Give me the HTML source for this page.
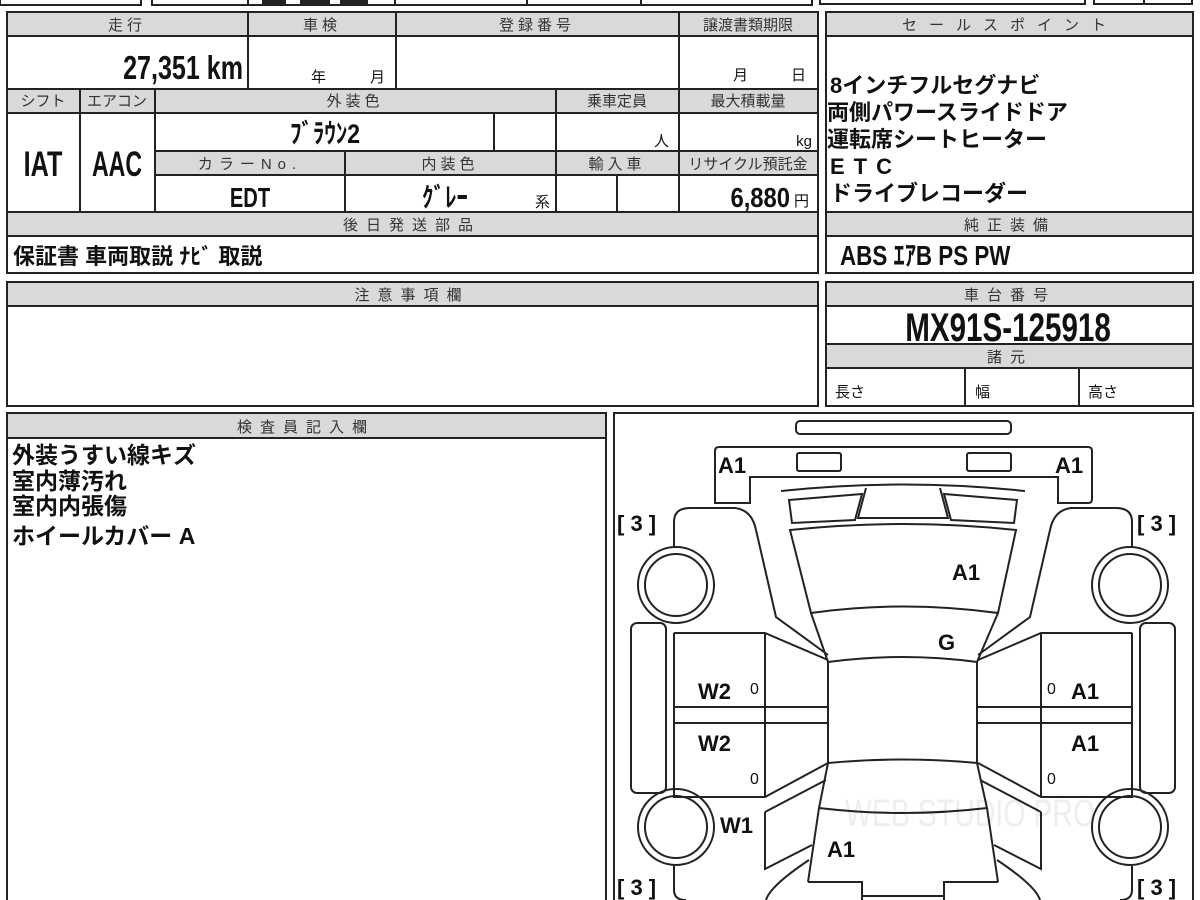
<!DOCTYPE html>
<html><head><meta charset="utf-8"><style>
html,body{margin:0;padding:0;background:#fff;width:1200px;height:900px;overflow:hidden}
svg{display:block}
text{font-family:"Liberation Sans","Noto Sans CJK JP",sans-serif;fill:#111}
.h{font-size:15px;text-anchor:middle;fill:#333;letter-spacing:4px}
.n{font-weight:bold}
</style></head><body>
<svg width="1200" height="900" viewBox="0 0 1200 900" xmlns="http://www.w3.org/2000/svg">
<g fill="none" stroke="#222" stroke-width="2">
<rect x="0" y="-20" width="141" height="25"/>
<rect x="152" y="-20" width="660" height="25"/>
<path d="M248,-5V5M395,-5V5M527,-5V5M641,-5V5"/>
<rect x="820" y="-20" width="265" height="24"/>
<rect x="1094" y="-20" width="98" height="24"/>
<path d="M1144,-5V4"/>
</g>
<rect x="262" y="0" width="24" height="5" fill="#222"/><rect x="300" y="0" width="30" height="5" fill="#222"/><rect x="340" y="0" width="28" height="5" fill="#222"/>
<g fill="#d9d9d9">
<rect x="7" y="12" width="811" height="24"/><rect x="7" y="89" width="811" height="24"/>
<rect x="155" y="151" width="663" height="24"/><rect x="7" y="212" width="811" height="24"/>
<rect x="826" y="12" width="367" height="24"/><rect x="826" y="212" width="367" height="24"/>
<rect x="826" y="282" width="367" height="24"/><rect x="826" y="344" width="367" height="24"/>
<rect x="7" y="282" width="811" height="24"/><rect x="7" y="413" width="599" height="25"/>
</g>
<g fill="none" stroke="#222" stroke-width="2">
<rect x="7" y="12" width="811" height="261"/>
<path d="M7,36H818M7,89H818M7,113H818M155,151H818M155,175H818M7,212H818M7,236H818"/>
<path d="M248,12V89M396,12V89M679,12V212M80,89V212M155,89V212M556,89V212M494,113V151M345,151V212M617,175V212"/>
<rect x="826" y="12" width="367" height="261"/>
<path d="M826,36H1193M826,212H1193M826,236H1193"/>
<rect x="826" y="282" width="367" height="124"/>
<path d="M826,306H1193M826,344H1193M826,368H1193M965,368V406M1079,368V406"/>
<rect x="7" y="282" width="811" height="124"/><path d="M7,306H818"/>
<rect x="7" y="413" width="599" height="500"/><path d="M7,438H606"/>
<rect x="614" y="413" width="579" height="500"/>
</g>
<text class="h" x="127" y="30">走行</text><text class="h" x="322" y="30">車検</text>
<text class="h" x="537" y="30">登録番号</text><text class="h" x="748" y="30" style="letter-spacing:0">譲渡書類期限</text>
<text class="n" transform="translate(243,79) scale(0.76,1)" text-anchor="end" font-size="33">27,351 km</text>
<text x="311" y="82" font-size="15">年</text><text x="370" y="82" font-size="15">月</text>
<text x="733" y="80" font-size="15">月</text><text x="791" y="80" font-size="15">日</text>
<text class="h" x="43" y="106" style="letter-spacing:0">シフト</text><text class="h" x="117" y="106" style="letter-spacing:0">エアコン</text>
<text class="h" x="355" y="106">外装色</text><text class="h" x="617" y="106" style="letter-spacing:0">乗車定員</text>
<text class="h" x="748" y="106" style="letter-spacing:0">最大積載量</text>
<text class="n" transform="translate(325,143) scale(0.85,1)" text-anchor="middle" font-size="27">ﾌﾞﾗｳﾝ2</text>
<text x="654" y="146" font-size="15">人</text><text x="812" y="146" font-size="15" text-anchor="end">kg</text>
<text class="n" transform="translate(43,176) scale(0.72,1)" text-anchor="middle" font-size="35">IAT</text>
<text class="n" transform="translate(117,176) scale(0.66,1)" text-anchor="middle" font-size="35">AAC</text>
<text class="h" x="250" y="169" style="letter-spacing:6px">カラーNo.</text><text class="h" x="450" y="169">内装色</text>
<text class="h" x="617" y="169">輸入車</text><text class="h" x="748" y="169" style="letter-spacing:0">リサイクル預託金</text>
<text class="n" transform="translate(250,207) scale(0.72,1)" text-anchor="middle" font-size="28">EDT</text>
<text class="n" transform="translate(445,207) scale(0.85,1)" text-anchor="middle" font-size="27">ｸﾞﾚｰ</text>
<text x="535" y="207" font-size="15">系</text>
<text class="n" transform="translate(790,207) scale(0.85,1)" text-anchor="end" font-size="28">6,880</text><text x="794" y="206" font-size="15">円</text>
<text class="h" x="412" y="230" style="letter-spacing:8px">後日発送部品</text>
<text font-weight="bold" x="13" y="264" font-size="22">保証書 車両取説 ﾅﾋﾞ 取説</text>
<text class="h" x="1010" y="30" style="letter-spacing:12px">セールスポイント</text>
<g font-size="22" font-weight="bold">
<text x="830" y="93">8インチフルセグナビ</text>
<text x="827" y="120">両側パワースライドドア</text>
<text x="827" y="147">運転席シートヒーター</text>
<text x="830" y="174" style="letter-spacing:9px">ETC</text>
<text x="830" y="201">ドライブレコーダー</text>
</g>
<text class="h" x="1010" y="230" style="letter-spacing:8px">純正装備</text>
<text class="n" transform="translate(840,265) scale(0.8,1)" font-size="28">ABS ｴｱB PS PW</text>
<text class="h" x="1010" y="300" style="letter-spacing:8px">車台番号</text>
<text class="n" transform="translate(1008,341) scale(0.74,1)" text-anchor="middle" font-size="40">MX91S-125918</text>
<text class="h" x="1010" y="362" style="letter-spacing:8px">諸元</text>
<text x="835" y="397" font-size="15">長さ</text><text x="975" y="397" font-size="15">幅</text><text x="1088" y="397" font-size="15">高さ</text>
<text class="h" x="412" y="300" style="letter-spacing:8px">注意事項欄</text>
<text class="h" x="306" y="432" style="letter-spacing:8px">検査員記入欄</text>
<g font-size="23" font-weight="bold">
<text x="12" y="463">外装うすい線キズ</text><text x="12" y="489">室内薄汚れ</text>
<text x="12" y="514">室内内張傷</text><text x="12" y="544">ホイールカバー A</text>
</g>
<text x="845" y="826" font-size="38" transform="translate(845,826) scale(0.75,1) translate(-845,-826)" style="fill:#eeeeee">WEB STUDIO PRO</text>
<g fill="none" stroke="#222" stroke-width="2">
<rect x="796" y="421" width="215" height="13" rx="4"/>
<path d="M715,503V451Q715,447 719,447H1088Q1092,447 1092,451V499Q1092,503 1088,503H1058V477H750V503Z"/>
<rect x="797" y="453" width="44" height="18" rx="2"/><rect x="967" y="453" width="44" height="18" rx="2"/>
<path d="M781,491Q903,478 1025,491"/>
<path d="M789,500L862,494L855,520L792,523Z"/>
<path d="M1017,500L944,494L951,520L1014,523Z"/>
<path d="M866,488L858,518H948L940,488"/>
<path d="M790,530Q903,518 1016,530L998,613Q903,600 811,613Z"/>
<path d="M811,613L828,662Q903,652 977,662L998,613"/>
<path d="M828,662V763M977,662V763M828,763Q903,756 977,763"/>
<path d="M828,763L819,808Q903,818 987,808L977,763"/>
<path d="M819,808L808,882M987,808L998,882"/>
<path d="M808,882H862V900M944,900V882H998M862,896H944"/>
<g id="L">
<path d="M674,547V522Q674,508 690,508H735Q752,510 756,530L776,617L828,655"/>
<circle cx="676" cy="585" r="38"/><circle cx="676" cy="585" r="31"/>
<rect x="631" y="623" width="35" height="170" rx="6"/>
<path d="M674,633H765L828,660M674,633V797H765L828,763M765,633V797M674,707H828M674,723H828"/>
<circle cx="676" cy="827" r="38"/><circle cx="676" cy="827" r="31"/>
<path d="M765,812L826,780M765,812V869L812,845M674,866V890Q674,900 686,900M766,900Q770,886 809,860"/>
</g>
<use href="#L" transform="translate(1806,0) scale(-1,1)"/>
</g>
<g font-size="22" font-weight="bold">
<text x="718" y="473">A1</text><text x="1055" y="473">A1</text>
<text x="952" y="580">A1</text><text x="938" y="650">G</text>
<text x="698" y="699">W2</text><text x="1071" y="699">A1</text>
<text x="698" y="751">W2</text><text x="1071" y="751">A1</text>
<text x="720" y="833">W1</text><text x="827" y="857">A1</text>
</g>
<g font-size="16"><text x="750" y="694">0</text><text x="1047" y="694">0</text>
<text x="750" y="784">0</text><text x="1047" y="784">0</text></g>
<g font-size="22" font-weight="bold">
<text x="617" y="531" xml:space="preserve">[ 3 ]</text><text x="1137" y="531" xml:space="preserve">[ 3 ]</text>
<text x="617" y="895" xml:space="preserve">[ 3 ]</text><text x="1137" y="895" xml:space="preserve">[ 3 ]</text>
</g>
</svg>
</body></html>
